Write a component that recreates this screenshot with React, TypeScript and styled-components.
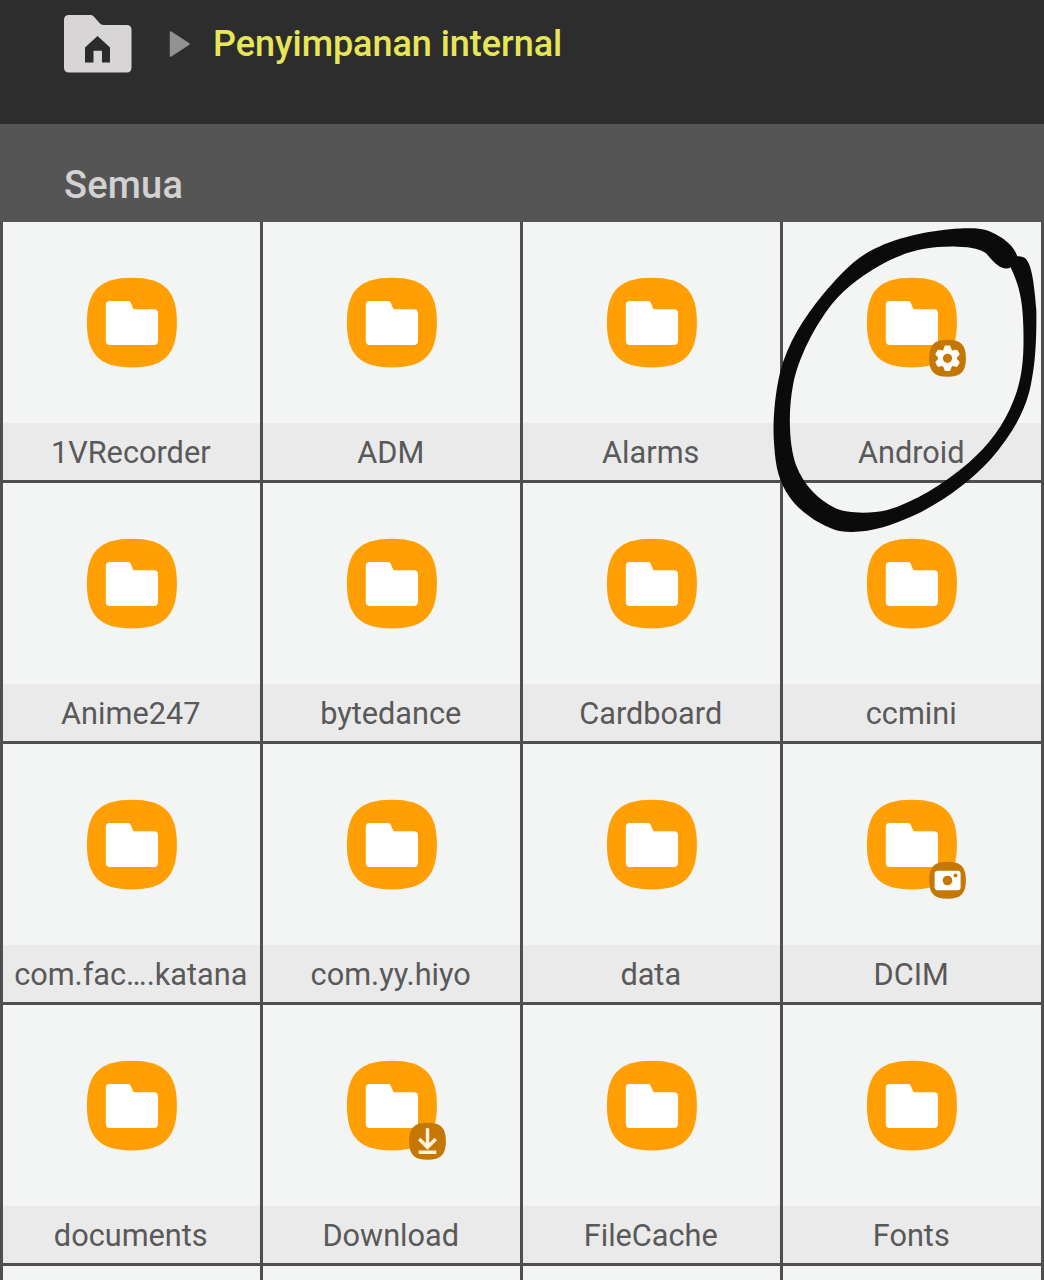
import React from "react";
import styled, { createGlobalStyle } from "styled-components";

type Badge = "gear" | "camera" | "download";

interface Folder {
  name: string;
  badge?: Badge;
  circled?: boolean;
}

const folders: Folder[] = [
  { name: "1VRecorder" },
  { name: "ADM" },
  { name: "Alarms" },
  { name: "Android", badge: "gear", circled: true },
  { name: "Anime247" },
  { name: "bytedance" },
  { name: "Cardboard" },
  { name: "ccmini" },
  { name: "com.fac….katana" },
  { name: "com.yy.hiyo" },
  { name: "data" },
  { name: "DCIM", badge: "camera" },
  { name: "documents" },
  { name: "Download", badge: "download" },
  { name: "FileCache" },
  { name: "Fonts" },
];

const GlobalStyle = createGlobalStyle`
  * { box-sizing: border-box; }
  body {
    margin: 0;
    background: #4f4f4f;
    font-family: Roboto, "Liberation Sans", sans-serif;
  }
`;

const Screen = styled.div`
  width: 1044px;
  height: 1280px;
  overflow: hidden;
  background: #4f4f4f;
`;

const PathBar = styled.header`
  display: flex;
  align-items: flex-start;
  height: 124px;
  padding: 14px 0 0 63px;
  background: #2d2d2d;
`;

const Arrow = styled.svg`
  margin: 16px 0 0 36px;
`;

const PathName = styled.span`
  margin: 9px 0 0 23px;
  font-size: 36px;
  line-height: 42px;
  font-weight: 500;
  letter-spacing: -0.05px;
  color: #e6e656;
  white-space: nowrap;
`;

const SectionBar = styled.h2`
  height: 98px;
  margin: 0;
  padding: 39px 0 0 64px;
  background: #555555;
  font-size: 38px;
  line-height: 44px;
  font-weight: 500;
  letter-spacing: 0.2px;
  color: #d2d2d2;
`;

const Grid = styled.main`
  display: grid;
  grid-template-columns: repeat(3, 257px) 258px;
  grid-auto-rows: 258px;
  gap: 3px;
  padding-left: 3px;
`;

const Cell = styled.div`
  position: relative;
  display: flex;
  flex-direction: column;
  justify-content: space-between;
  background: #f3f4f4;
`;

const FolderIcon = styled.svg`
  display: block;
  margin: 55px 0 0 83px;
`;

const Label = styled.div`
  height: 57px;
  padding-right: 1.5px;
  background: #eaeaea;
  color: #595959;
  font-size: 30.7px;
  line-height: 60px;
  text-align: center;
  white-space: nowrap;
`;

const Marker = styled.svg`
  position: absolute;
  left: -19px;
  top: -2px;
  z-index: 2;
  pointer-events: none;
`;

const BadgeGlyph = ({ kind }: { kind: Badge }) => {
  if (kind === "gear") {
    return (
      <g>
        <g fill="#fff">
          {[0, 60, 120, 180, 240, 300].map((angle) => (
            <path
              key={angle}
              d="M-4.6 -7 L-3 -11.8 Q-2.7 -12.7 -1.8 -12.7 H1.8 Q2.7 -12.7 3 -11.8 L4.6 -7Z"
              transform={`rotate(${angle})`}
            />
          ))}
          <circle r="9.3" />
        </g>
        <circle r="4.6" fill="#c57703" />
      </g>
    );
  }
  if (kind === "camera") {
    return (
      <g>
        <rect x="-12.9" y="-9.5" width="26" height="19.4" rx="3" fill="#fff" />
        <circle cx="0" cy="0.2" r="4.8" fill="#c57703" />
        <circle cx="8" cy="-4.9" r="2" fill="#c57703" />
      </g>
    );
  }
  return (
    <g fill="none" stroke="#fff3dc" strokeWidth="3.5">
      <path d="M0 -13V5M-8.3 -2.4L0 5.9L8.3 -2.4M-8.8 11H8.8" />
    </g>
  );
};

const FolderGlyph = ({ badge }: { badge?: Badge }) => (
  <FolderIcon width="102" height="102" viewBox="0 0 102 102">
    <path
      d="M45.9 0.7C77.9 0.7 90.9 13.5 90.9 45.6S77.9 90.5 45.9 90.5S0.9 77.7 0.9 45.6S13.9 0.7 45.9 0.7Z"
      fill="#ff9f04"
    />
    <path
      transform="translate(0.6 0.3)"
      d="M23 23.8H41.2C43 23.8 43.8 24.6 44.4 26.2L46.2 30.4C46.6 31.5 47.2 31.9 48.4 31.9H67.2Q71.4 31.9 71.4 36V63.4Q71.4 67.6 67.2 67.6H23.2Q19.2 67.6 19.2 63.4V27.8Q19.2 23.8 23 23.8Z"
      fill="#fff"
    />
    {badge && (
      <g transform="translate(81.5 81.3)">
        <path
          d="M0 -18.5C13.3 -18.5 18.4 -13.3 18.4 0S13.3 18.5 0 18.5S-18.4 13.3 -18.4 0S-13.3 -18.5 0 -18.5Z"
          fill="#c57703"
        />
        <BadgeGlyph kind={badge} />
      </g>
    )}
  </FolderIcon>
);

const MarkerCircle = () => (
  <Marker width="280" height="330" viewBox="0 0 840 990">
    <path
      fill="#0b0b0b"
      fillRule="evenodd"
      d="M760 109C750 78 724 60 704 48C672 28 650 23 600 25C530 28 430 42 345 80C270 112 226 168 176 224C120 292 70 370 48 458C30 535 25 620 31 680C35 745 46 785 76 830C112 882 180 922 226 933C300 944 370 922 444 889C530 850 620 785 680 718C745 640 790 570 804 475C815 420 818 340 817 270C812 210 805 120 778 112Q768 108 760 109Z
         M741 145C762 190 776 230 778 320C780 400 778 470 748 543C719 617 674 676 614 728C540 792 450 846 370 870C320 882 250 881 215 865C165 841 118 795 96 735C74 675 72 570 88 490C105 410 151 320 204 252C245 202 305 157 372 123C440 90 500 78 580 80C625 81 652 88 666 100C688 124 700 140 720 145Q732 147 741 142Z"
    />
  </Marker>
);

export default function App() {
  return (
    <Screen>
      <GlobalStyle />
      <PathBar>
        <svg width="69" height="60" viewBox="0 0 69 60">
          <path
            d="M6 1H27C29 1 30 1.6 31.2 3L37 9.6C38 10.7 39 11 40.5 11H63.5Q68.5 11 68.5 16V53.5Q68.5 58.5 63.5 58.5H6Q1 58.5 1 53.5V6Q1 1 6 1Z"
            fill="#d8d5d6"
          />
          <path
            d="M34.5 22L47 33.5V48.5H39V36.7H30.5V48.5H22V33.5Z"
            fill="#2b2b2b"
          />
        </svg>
        <Arrow width="22" height="28" viewBox="0 0 22 28">
          <path
            d="M2.5 2L21 14L2.5 26Z"
            fill="#929292"
            stroke="#929292"
            strokeWidth="1.5"
            strokeLinejoin="round"
          />
        </Arrow>
        <PathName>Penyimpanan internal</PathName>
      </PathBar>
      <SectionBar>Semua</SectionBar>
      <Grid>
        {folders.map((folder) => (
          <Cell key={folder.name}>
            <FolderGlyph badge={folder.badge} />
            <Label>{folder.name}</Label>
            {folder.circled && <MarkerCircle />}
          </Cell>
        ))}
        {[0, 1, 2, 3].map((i) => (
          <Cell key={i} />
        ))}
      </Grid>
    </Screen>
  );
}
